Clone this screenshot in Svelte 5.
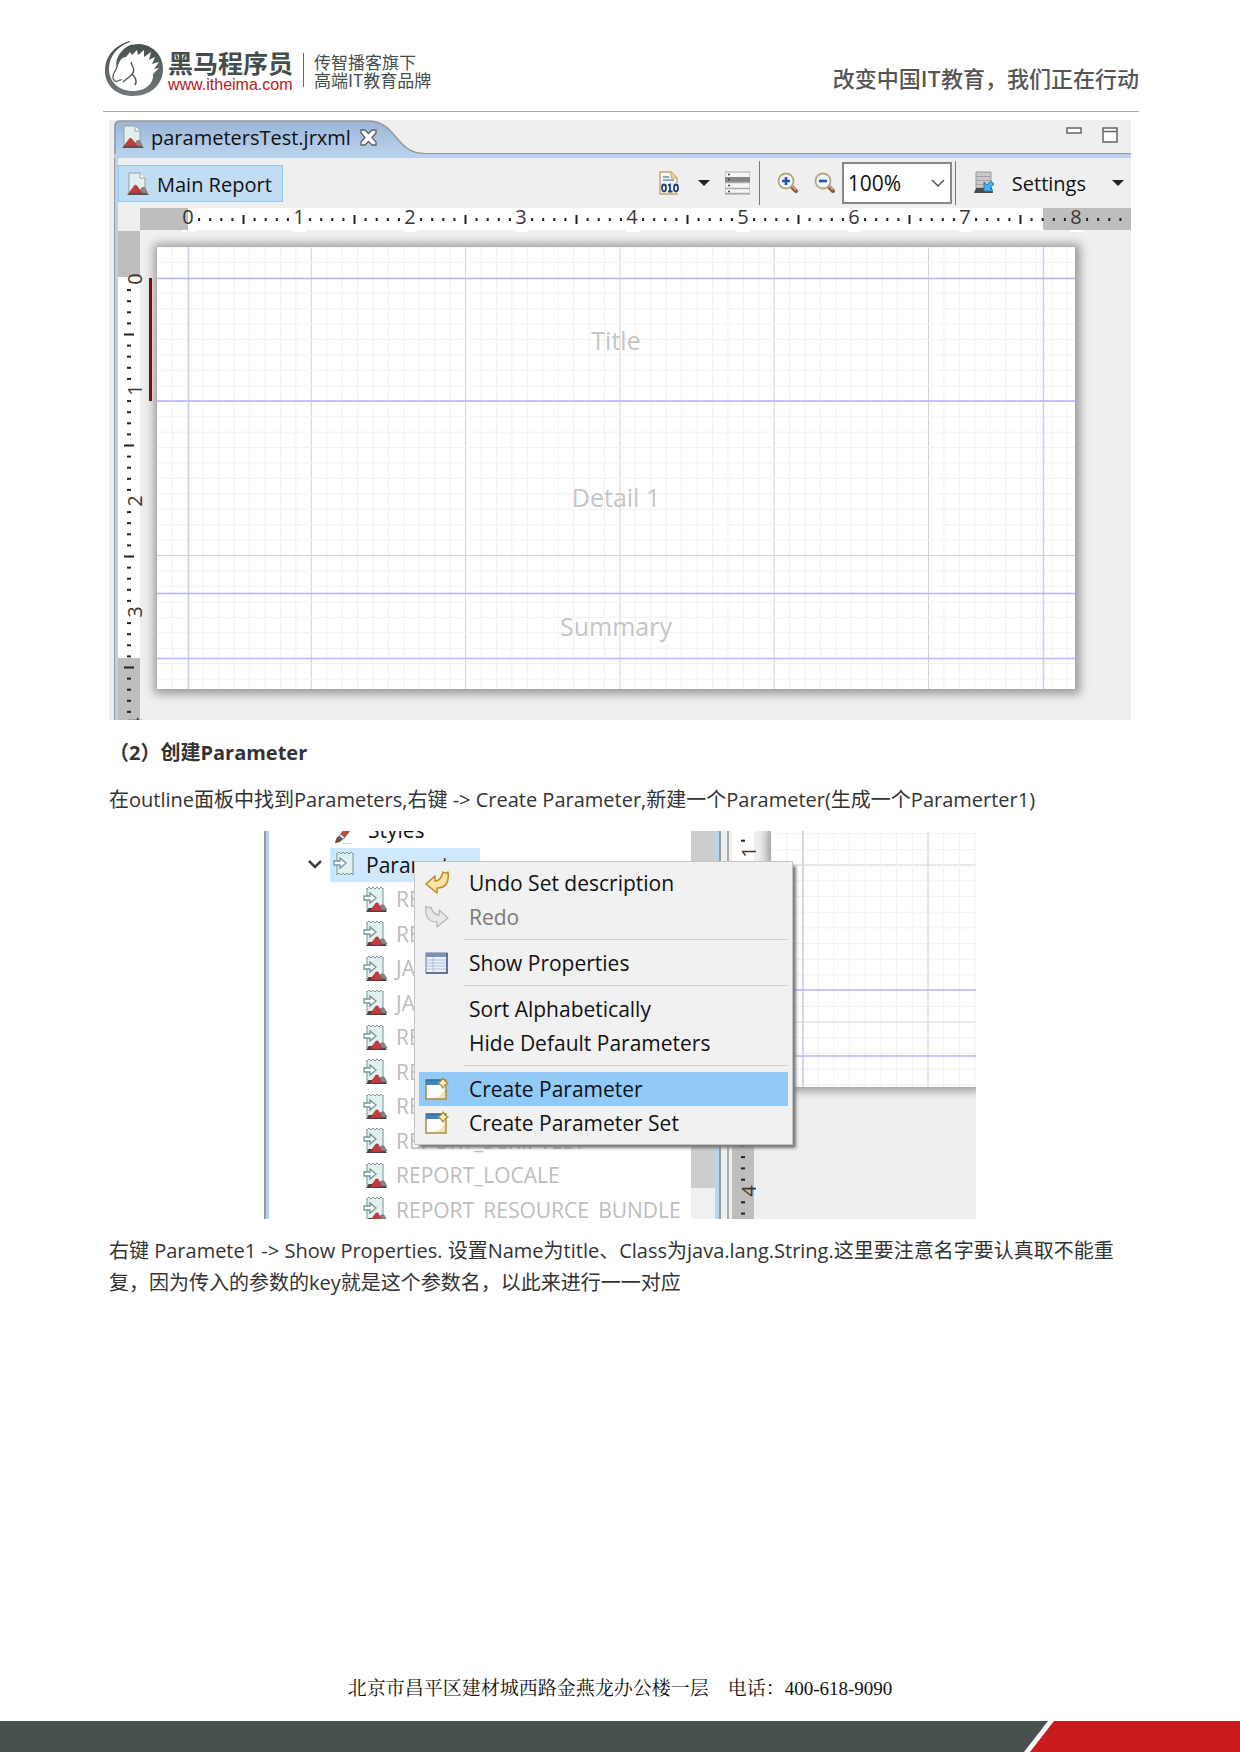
<script>
  const range = (n) => Array.from({ length: n }, (_, i) => i);

  const INCH = 111;
  const rulerTicks = range(85).filter((i) => i % 10 !== 0);
  const rulerNumbers = range(9);

  const MINOR = 15.43;
  const minorCols = range(60).map((i) => i * MINOR);
  const minorRows = range(29).map((i) => i * MINOR);
  const isMajor = (i) => i > 0 && i % 10 === 0;

  const params = [
    'REPORT_CONTEXT',
    'REPORT_PARAMETERS_MAP',
    'JASPER_REPORTS_CONTEXT',
    'JASPER_REPORT',
    'REPORT_CONNECTION',
    'REPORT_MAX_COUNT',
    'REPORT_DATA_SOURCE',
    'REPORT_SCRIPTLET',
    'REPORT_LOCALE',
    'REPORT_RESOURCE_BUNDLE',
  ];

  const menu = [
    { label: 'Undo Set description', icon: 'undo' },
    { label: 'Redo', icon: 'redo', disabled: true },
    null,
    { label: 'Show Properties', icon: 'props' },
    null,
    { label: 'Sort Alphabetically' },
    { label: 'Hide Default Parameters' },
    null,
    { label: 'Create Parameter', icon: 'create', active: true },
    { label: 'Create Parameter Set', icon: 'create' },
  ];
</script>

{#snippet reportIcon()}
  <svg class="ico" width="22" height="25" viewBox="0 0 22 25" aria-hidden="true">
    <path d="M2 1H13L18 6V22H2Z" fill="#e3efef" stroke="#8fa4a4" />
    <path d="M13 1V6H18" fill="#fff" stroke="#8fa4a4" />
    <path d="M0 23L3 20H19L22 23Z" fill="#555" />
    <path d="M11 21L15 15L18 15L21 21Z" fill="#8c8484" />
    <path d="M2 21L8 13L10 14L15 21Z" fill="#c23c3c" stroke="#9c3030" stroke-width=".6" />
  </svg>
{/snippet}

{#snippet scroll()}
  <path d="M5 2H21V23H5Z" fill="#e3f0f0" />
  <path d="M5 2V24M21 2V24" stroke="#8aa5a7" stroke-width="1.2" />
  <path d="M5 3L7 1L9 3L11 1L13 3L15 1L17 3L19 1L21 3" fill="none" stroke="#7d9799" />
  <path d="M5 24L7 22L9 24L11 22L13 24L15 22L17 24L19 22L21 24" fill="none" stroke="#7d9799" />
  <path d="M2 10H8V7L14 12L8 17V14H2Z" fill="#fff" stroke="#78969a" stroke-width="1.3" />
{/snippet}

{#snippet paramIcon(small)}
  <svg class="ico" width="26" height="27" viewBox="0 0 26 27" aria-hidden="true">
    {@render scroll()}
    {#if small}
      <path d="M4 26L7 22H22L25 26Z" fill="#444" />
      <path d="M15 24L19 19H22L25 24Z" fill="#8a8484" stroke="#666" stroke-width=".6" />
      <path d="M8 25L14 17L16 17L20 25Z" fill="#c43c40" stroke="#98282c" stroke-width=".6" />
    {/if}
  </svg>
{/snippet}

{#snippet zoomIcon(plus)}
  <svg class="ico" width="22" height="22" viewBox="0 0 22 22" aria-hidden="true">
    <path d="M14 14L19 19" stroke="#8b5a3c" stroke-width="4" stroke-linecap="round" />
    <path d="M14 13L19 18" stroke="#d7b08a" stroke-width="1.4" />
    <circle cx="9" cy="9" r="7.5" fill="#eef4fb" stroke="#b5a877" stroke-width="1.8" />
    <path d={plus ? 'M5 9H13M9 5V13' : 'M5 9H13'} stroke="#2c4eb0" stroke-width="2.6" />
  </svg>
{/snippet}

{#snippet menuIcon(name)}
  <svg class="ico" width="24" height="24" viewBox="0 0 24 24" aria-hidden="true">
    {#if name === 'undo'}
      <path d="M1 13L10 5V10Q16 10 18 1Q21 3 23 1Q25 17 12 17V22Z" fill="#fde3a0" stroke="#c08a2c" stroke-width="1.5" stroke-linejoin="round" />
    {:else if name === 'redo'}
      <path d="M23 13L14 5V10Q8 10 6 2Q3 4 1 1Q-1 17 12 17V22Z" fill="#e8e8e8" stroke="#b9b9b9" stroke-width="1.3" stroke-linejoin="round" />
    {:else if name === 'props'}
      <rect x="1" y="2" width="21" height="20" fill="#e9f0fb" stroke="#67799c" />
      <rect x="1" y="2" width="21" height="4" fill="#7d90b2" />
      <path d="M8 6V22M2 9H22M2 12H22M2 15H22M2 18H22" stroke="#b4c0d8" />
      <path d="M1 22H22V2" fill="none" stroke="#4c5d80" stroke-width="1.5" />
    {:else}
      <rect x="1" y="3" width="20" height="19" fill="#fbfdff" stroke="#a58a4a" stroke-width="1.5" />
      <path d="M1 3H17V8H1Z" fill="#3f83c4" />
      <path d="M1 3H17" stroke="#2a5f98" />
      <path d="M5 21Q18 21 20 10V21Z" fill="#f6e3a8" />
      <path d="M18 1L20 4L23 6L20 8L18 11L16 8L13 6L16 4Z" fill="#fff3c4" stroke="#b08a34" stroke-width="1.2" />
    {/if}
  </svg>
{/snippet}

{#snippet verticalTicks(step, origin, from, to)}
  {#each range(60) as i}
    {@const y = origin + (i * step) / 10}
    {#if y > from && y < to && i % 10 !== 0}
      {#if i % 5 === 0}
        <path d="M6 {y}h10" stroke="currentColor" stroke-width="2" />
      {:else}
        <path d="M9 {y}h4" stroke="currentColor" stroke-width="2" />
      {/if}
    {/if}
  {/each}
{/snippet}

<div class="page">
  <header class="masthead">
    <a class="brand" href="#home">
      <svg class="horse" width="60" height="58" viewBox="0 0 60 58" aria-hidden="true">
        <defs>
          <linearGradient id="ring" x1="0" y1="0" x2="0" y2="1">
            <stop offset="0" stop-color="#434d4b" />
            <stop offset="1" stop-color="#747a7d" />
          </linearGradient>
        </defs>
        <path d="M26 1C11 5 1 16 1 31C1 46 13 56 29 56C46 56 59 45 59 29C59 15 49 5 35 4C31 4 28 5 26 5Z" fill="url(#ring)" />
        <path d="M26 2C13 6 5 17 5 29C5 42 15 51 29 51C43 51 50 42 49 34L55 28L50 29L55 22L48 24L51 17L45 20L47 12L40 17L40 10L34 15L33 10L28 15L26 12L22 17L18 18C15 20 14 24 13 28C10 20 16 9 28 4Z" fill="#fff" />
        <path d="M19 17C13 20 14 27 11 31C8 36 8 39 11 41C13 43 15 39 18 40" fill="none" stroke="#59615f" stroke-width="1.3" />
        <path d="M27 22L28 25C31 30 30 34 25 37L19 42M28 34C32 38 33 42 31 45" fill="none" stroke="#4b5553" stroke-width="1.4" />
      </svg>
      <span class="names">
        <strong>黑马程序员</strong>
        <span class="url">www.itheima.com</span>
      </span>
      <span class="tagline">传智播客旗下<br />高端IT教育品牌</span>
    </a>
    <p class="slogan">改变中国IT教育，我们正在行动</p>
  </header>

  <main>
    <section class="editor" aria-label="Report editor">
      <div class="editor-frame">
        <div class="tabs">
          <div class="tab">
            <svg class="tab-shape" width="312" height="34" viewBox="0 0 312 34" aria-hidden="true">
              <defs>
                <linearGradient id="tabfill" x1="0" y1="0" x2="0" y2="1">
                  <stop offset="0" stop-color="#9ab5d6" />
                  <stop offset="1" stop-color="#b9d1ec" />
                </linearGradient>
              </defs>
              <path d="M0 34V6Q0 1 6 1H254C283 1 281 33 310 33.5V34Z" fill="url(#tabfill)" />
              <path d="M1 34V6Q1 1 6 1H254C283 1 281 33 310 33.5" fill="none" stroke="#999" stroke-width="1.5" />
            </svg>
            <button class="tab-name">{@render reportIcon()}parametersTest.jrxml</button>
            <button class="close" aria-label="Close">
              <svg width="17" height="17" viewBox="0 0 17 17" aria-hidden="true">
                <path d="M1 1H5L8.500 4.500L12 1H16V4L12 8.500L16 13V16H12L8.500 12.500L5 16H1V13L5 8.500L1 4Z" fill="#fff" stroke="#606060" stroke-width="1.3" />
              </svg>
            </button>
          </div>
          <div class="window-buttons">
            <button aria-label="Minimize">
              <svg width="16" height="16" viewBox="0 0 16 16"><rect x="1" y="1" width="14" height="5" fill="#fff" stroke="#666" stroke-width="1.500" /></svg>
            </button>
            <button aria-label="Maximize">
              <svg width="16" height="16" viewBox="0 0 16 16"><path d="M1 1H15V15H1ZM1 4.500H15" fill="#fff" stroke="#666" stroke-width="1.500" /></svg>
            </button>
          </div>
        </div>

        <div class="toolbar">
          <button class="main-report">{@render reportIcon()}Main Report</button>
          <div class="tools">
            <button class="compile" aria-label="Compile">
              <svg class="ico" width="22" height="24" viewBox="0 0 22 24">
                <path d="M2 1H13L19 7V23H2Z" fill="#f4f8fd" stroke="#c4a659" stroke-width="1.4" />
                <path d="M13 1V7H19" fill="#ecd49a" stroke="#c4a659" />
                <path d="M5 6H11M5 9H16" stroke="#6c8dc0" stroke-width="1.4" />
                <rect x="3" y="12" width="18" height="10" fill="#f2f6fb" />
                <ellipse cx="6" cy="17" rx="2" ry="3.500" fill="none" stroke="#213f77" stroke-width="1.8" />
                <path d="M10 14.500L12 13.500V20.500M10 20.500H14.500" fill="none" stroke="#213f77" stroke-width="1.8" />
                <ellipse cx="18" cy="17" rx="2" ry="3.500" fill="none" stroke="#213f77" stroke-width="1.8" />
              </svg>
            </button>
            <button class="drop" aria-label="Compile options"><span class="caret"></span></button>
            <button class="bands" aria-label="Bands">
              <svg class="ico" width="25" height="24" viewBox="0 0 25 24">
                <rect x="0" y="1" width="25" height="22" fill="#f6f6f6" stroke="#aaa" />
                <rect x="0" y="6" width="25" height="5" fill="#858585" />
                <path d="M0 11.500H25M0 17.500H25M0 22.500H25" stroke="#aaa" stroke-width="1.5" />
                <path d="M3 3.500h2M3 8.500h2M3 14.500h2M3 20.500h2" stroke="#444" stroke-width="1.5" />
              </svg>
            </button>
            <span class="divider"></span>
            <button class="zoom-in" aria-label="Zoom in">{@render zoomIcon(true)}</button>
            <button class="zoom-out" aria-label="Zoom out">{@render zoomIcon(false)}</button>
            <span class="combo">
              <select aria-label="Zoom level"><option>100%</option></select>
              <svg class="chevron" width="14" height="9" viewBox="0 0 14 9" aria-hidden="true"><path d="M1 1L7 7L13 1" fill="none" stroke="#555" stroke-width="1.5" /></svg>
            </span>
            <span class="divider near"></span>
            <button class="settings">
              <svg class="ico" width="20" height="24" viewBox="0 0 20 24" aria-hidden="true">
                <path d="M2 1H17V17H2Z" fill="#c9c9c9" stroke="#999" />
                <path d="M2 5.500H17M2 9.500H17M2 13.500H17" stroke="#a2a2a2" />
                <path d="M0 22L2 17H18L19 22Z" fill="#4a4a4a" />
                <path d="M10 11V20H19L16 17L20 13L17 10L13 14Z" fill="#45b2ee" stroke="#1e80c4" />
              </svg>
              Settings
            </button>
            <button class="drop last" aria-label="Settings options"><span class="caret"></span></button>
          </div>
        </div>

        <div class="ruler-h">
          <svg width="100%" height="25" aria-hidden="true">
            <rect width="100%" height="22" fill="#bebebe" />
            <rect x="48" width="855" height="22" fill="#fff" />
            {#each rulerTicks as i}
              {@const x = 48 + (i * INCH) / 10}
              {#if i % 5 === 0}
                <path d="M{x} 7v9" stroke="#222" stroke-width="2" />
              {:else}
                <path d="M{x} 10v3" stroke="#222" stroke-width="2" />
              {/if}
            {/each}
            {#each rulerNumbers as n}
              <rect x={42 + n * INCH} y="22" width="13" height="2" fill="#fff" />
              <text class="num" x={48 + n * INCH} y="16">{n}</text>
            {/each}
          </svg>
        </div>

        <div class="workspace">
          <svg class="ruler-v" width="24" height="489" aria-hidden="true">
            <rect width="22" height="489" fill="#bebebe" />
            <rect y="46" width="22" height="381" fill="#fff" />
            {@render verticalTicks(INCH, 48, 50, 489)}
            {#each range(5) as n}
              <text class="num" transform="translate(24 {48 + n * INCH}) rotate(-90)">{n}</text>
            {/each}
          </svg>
          <div class="band-mark"></div>
          <div class="sheet">
            <svg class="grid" width="100%" height="442" aria-hidden="true">
              {#each minorCols as x, i}
                <path d="M{x} 0V442" stroke={isMajor(i) ? '#d2d2d2' : '#f1f1f1'} />
              {/each}
              {#each minorRows as y, i}
                <path d="M0 {y}H1200" stroke={isMajor(i) ? '#d2d2d2' : '#f1f1f1'} />
              {/each}
              <path d="M31.500 0V442M886.500 0V442" stroke="#ccccfb" stroke-width="1.5" />
              <path d="M0 31.500H1200M0 154H1200M0 346.500H1200M0 411.500H1200" stroke="#b8b5fa" stroke-width="1.5" />
            </svg>
            <div class="band title">Title</div>
            <div class="band detail">Detail 1</div>
            <div class="band summary">Summary</div>
          </div>
        </div>
      </div>
    </section>

    <h3>（2）创建Parameter</h3>
    <p class="step">在outline面板中找到Parameters,右键 -&gt; Create Parameter,新建一个Parameter(生成一个Paramerter1)</p>

    <section class="outline" aria-label="Outline">
      <ul class="tree">
        <li class="top">
          <svg class="ico" width="26" height="27" viewBox="0 0 26 27" aria-hidden="true">
            <path d="M8 26H24L12 27Z" fill="#ccc" />
            <path d="M8 18L20 4L23 7L12 21Z" fill="#c9463a" stroke="#8e3a30" />
            <path d="M7 19L9 17L13 21L11 22Z" fill="#dfe8f2" stroke="#7d8da5" />
            <path d="M3 26Q4 20 7 19L11 22Q8 26 3 26Z" fill="#7a4a34" />
            <path d="M5 23L8 20L10 22Z" fill="#3f6fb0" />
          </svg>
          <span>Styles</span>
        </li>
        <li class="top selected">
          <svg class="twisty" width="14" height="9" viewBox="0 0 14 9" aria-hidden="true"><path d="M1 1L7 7L13 1" fill="none" stroke="#404040" stroke-width="2.5" /></svg>
          <div class="hit">{@render paramIcon(false)}<span>Parameters</span></div>
        </li>
        {#each params as p}
          <li class="child">{@render paramIcon(true)}<span>{p}</span></li>
        {/each}
      </ul>
      <div class="scrollbar"><div class="thumb"></div></div>
      <div class="sash"></div>
      <svg class="side-ruler" width="24" height="388" aria-hidden="true">
        <rect width="22" height="388" fill="#fff" />
        <rect y="225" width="22" height="163" fill="#bebebe" />
        {@render verticalTicks(113, -92, 0, 388)}
        <text class="num" transform="translate(24 21) rotate(-90)">1</text>
        <text class="num" transform="translate(24 360) rotate(-90)">4</text>
      </svg>
      <div class="preview">
        <svg class="grid" width="100%" height="256" aria-hidden="true">
          {#each range(24) as i}
            <path d="M{i * 15.7} 0V256" stroke={isMajor(i) ? '#d2d2d2' : '#f1f1f1'} />
            <path d="M0 {2.700 + i * 15.7}H400" stroke={i === 2 || i === 12 ? '#d2d2d2' : '#f1f1f1'} />
          {/each}
          <path d="M32 0V256" stroke="#d2d2fc" stroke-width="2" />
          <path d="M0 159H400M0 225H400" stroke="#b8b5fa" stroke-width="1.5" />
        </svg>
      </div>
      <div class="menu" role="menu">
        {#each menu as item}
          {#if item}
            <button role="menuitem" class:active={item.active} disabled={item.disabled}>
              <span class="slot">{#if item.icon}{@render menuIcon(item.icon)}{/if}</span>{item.label}
            </button>
          {:else}
            <hr />
          {/if}
        {/each}
      </div>
    </section>

    <p class="note">右键 Paramete1 -&gt; Show Properties. 设置Name为title、Class为java.lang.String.这里要注意名字要认真取不能重复，因为传入的参数的key就是这个参数名，以此来进行一一对应</p>
  </main>

  <footer>
    <address>北京市昌平区建材城西路金燕龙办公楼一层　电话：400-618-9090</address>
    <div class="stripe"><div class="dark"></div><div class="red"></div></div>
  </footer>
</div>

<style>
  :global(body) {
    margin: 0;
    background: #fff;
  }
  .page {
    min-height: 100vh;
    display: flex;
    flex-direction: column;
    font-family: 'Open Sans', 'Noto Sans CJK SC', sans-serif;
    color: #333;
  }
  button {
    font: inherit;
    color: inherit;
    background: none;
    border: 0;
    padding: 0;
    display: flex;
    align-items: center;
    white-space: nowrap;
  }
  .ico {
    flex: none;
    display: block;
  }
  svg {
    display: block;
  }

  .masthead {
    box-sizing: border-box;
    height: 112px;
    margin: 0 101px 0 103px;
    padding-top: 40px;
    border-bottom: 1px solid #a9a9a9;
    display: flex;
    justify-content: space-between;
    align-items: flex-start;
  }
  .brand {
    display: flex;
    color: #434d4b;
    text-decoration: none;
    font-family: 'Noto Sans CJK SC', sans-serif;
  }
  .horse {
    margin-left: 1px;
  }
  .names {
    display: flex;
    flex-direction: column;
    margin: 8px 10px 0 4px;
  }
  .names strong {
    font-size: 25px;
    line-height: 28px;
    font-weight: 700;
  }
  .url {
    font-family: 'Liberation Sans', sans-serif;
    font-size: 16px;
    line-height: 18px;
    color: #b4201c;
  }
  .tagline {
    align-self: flex-start;
    margin-top: 13px;
    padding-left: 10px;
    border-left: 1px solid #666;
    font-size: 17px;
    line-height: 18px;
    height: 34px;
  }
  .slogan {
    margin: 21px 0 0;
    font-family: 'Noto Sans CJK SC', sans-serif;
    font-size: 22px;
    line-height: 32px;
    font-weight: 500;
    color: #555;
  }

  main {
    margin: 8px 109px 0;
    flex: 1;
  }
  .editor {
    height: 600px;
    padding-left: 5px;
    background: #efefef;
    overflow: hidden;
    color: #111;
    font-size: 20px;
  }
  .tabs {
    display: flex;
    justify-content: space-between;
    height: 33px;
    border-bottom: 1px solid #999;
    box-shadow: 0 4px #b9d1ec;
    position: relative;
  }
  .tab {
    position: relative;
    display: flex;
    align-items: center;
    width: 312px;
    height: 34px;
    padding-left: 8px;
    gap: 9px;
  }
  .tab-shape {
    position: absolute;
    left: 0;
    top: 0;
  }
  .tab-name {
    position: relative;
    gap: 7px;
  }
  .close {
    position: relative;
  }
  .window-buttons {
    display: flex;
    gap: 20px;
    align-items: center;
    padding: 0 13px 4px 0;
  }
  .toolbar,
  .workspace {
    border-left: 1px solid #999;
    box-shadow: inset 3px 0 #b9d1ec;
  }
  .toolbar {
    height: 50px;
    margin-top: 4px;
    display: flex;
    justify-content: space-between;
    align-items: center;
    padding-left: 3px;
  }
  .main-report {
    box-sizing: border-box;
    height: 37px;
    padding: 2px 10px 0 8px;
    gap: 8px;
    background: #c1dcf3;
    border: 1px solid #90c8f6;
  }
  .tools {
    display: flex;
    align-items: center;
  }
  .caret {
    border: 6px solid transparent;
    border-top-color: #222;
    border-bottom: 0;
  }
  .drop {
    margin: 0 15px 0 18px;
  }
  .drop.last {
    margin: 0 7px 0 26px;
  }
  .divider {
    width: 1px;
    height: 44px;
    background: #777;
    margin: 0 17px 0 9px;
  }
  .divider.near {
    margin: 0 18px 0 3px;
  }
  .zoom-out {
    margin: 0 6px 0 15px;
  }
  .combo {
    position: relative;
  }
  select {
    appearance: none;
    box-sizing: border-box;
    width: 110px;
    height: 42px;
    padding: 0 4px;
    border: 2px solid #888;
    border-radius: 0;
    background: #fff;
    font: inherit;
    font-size: 21px;
    color: #111;
    display: block;
  }
  .chevron {
    position: absolute;
    right: 7px;
    top: 17px;
    pointer-events: none;
  }
  .settings {
    gap: 18px;
  }

  .ruler-h {
    height: 23px;
    padding-left: 26px;
    box-shadow: inset 1px 0 #999, inset 4px 0 #b9d1ec;
  }
  .ruler-h svg,
  .ruler-v {
    overflow: visible;
  }
  .num {
    font-size: 20px;
    text-anchor: middle;
    font-family: 'Open Sans', sans-serif;
    fill: #3b3632;
  }
  .workspace {
    display: flex;
    align-items: flex-start;
    padding-left: 3px;
    height: 489px;
  }
  .ruler-v,
  .side-ruler {
    flex: none;
    color: #222;
  }
  .band-mark {
    width: 3px;
    height: 123px;
    margin: 47px 5px 0 7px;
    background: #850808;
    position: relative;
    z-index: 1;
  }
  .sheet {
    position: relative;
    flex: 1;
    height: 381px;
    margin: 16px 56px 0 0;
    padding: 31px 0 30px;
    background: #fff;
    box-shadow: 1px 1px 9px 4px #999;
    font-size: 25px;
    color: #c6c6c6;
  }
  .grid {
    position: absolute;
    left: 0;
    top: 0;
  }
  .band {
    position: relative;
    display: flex;
    align-items: center;
    justify-content: center;
  }
  .title {
    height: 123px;
  }
  .detail {
    height: 192px;
  }
  .summary {
    height: 65px;
  }

  h3 {
    margin: 17px 0 15px;
    font-size: 20px;
    line-height: 32px;
    font-weight: 700;
  }
  .step,
  .note {
    margin: 0;
    font-size: 20px;
    line-height: 32px;
  }
  .note {
    margin-top: 16px;
  }

  .outline {
    position: relative;
    display: flex;
    max-width: 712px;
    height: 388px;
    margin: 15px auto 0;
    overflow: hidden;
    background: #efefef;
    font-size: 21px;
    color: #111;
  }
  .tree {
    box-sizing: border-box;
    list-style: none;
    width: 427px;
    height: 414px;
    margin: -18px 0 0;
    padding: 0;
    border-left: 2px solid #999;
    box-shadow: inset 3px 0 #bcd3ee;
    background: #fff;
    display: flex;
    flex-direction: column;
  }
  .tree li {
    flex: 1;
    min-height: 0;
    display: flex;
    align-items: center;
    white-space: nowrap;
  }
  .top {
    padding-left: 66px;
    gap: 10px;
  }
  .top.selected {
    padding-left: 42px;
    gap: 8px;
  }
  .hit {
    display: flex;
    align-items: center;
    gap: 8px;
    width: 148px;
    height: 100%;
    padding-left: 2px;
    background: #cde8ff;
  }
  .child {
    padding-left: 96px;
    gap: 8px;
    color: #bdbdbd;
  }
  .scrollbar {
    width: 24px;
    background: #f0f0f0;
  }
  .thumb {
    height: 357px;
    background: #cdcdcd;
  }
  .sash {
    box-sizing: border-box;
    width: 14px;
    border-left: 4px solid #bcd3ee;
    border-right: 2px solid #aaa;
    box-shadow: inset 2px 0 #999;
    margin-right: 3px;
  }
  .preview {
    position: relative;
    flex: 1;
    height: 256px;
    margin-left: 15px;
    background: #fff;
    box-shadow: 0 0 9px 4px #999;
    clip-path: inset(0 0 -20px -15px);
  }
  .menu {
    position: absolute;
    left: 150px;
    top: 30px;
    box-sizing: border-box;
    width: 379px;
    padding: 4px;
    border: 1px solid #c4c4c4;
    background: #f1f1f1;
    box-shadow: 4px 4px 3px -1px #777;
  }
  .menu button {
    width: 100%;
    height: 34px;
  }
  .menu button:disabled {
    color: #7a7a7a;
  }
  .menu .active {
    background: #91c9f7;
  }
  .slot {
    width: 44px;
    padding-left: 6px;
  }
  .menu hr {
    height: 1px;
    margin: 5px 0 6px 44px;
    border: 0;
    background: #d3d3d3;
  }

  footer address {
    font-family: 'Liberation Serif', 'Noto Serif CJK SC', 'Noto Sans CJK SC', serif;
    font-style: normal;
    font-size: 19px;
    line-height: 24px;
    text-align: center;
    color: #111;
    margin-bottom: 20px;
  }
  .stripe {
    display: flex;
    height: 31px;
    background: #fff;
  }
  .dark {
    flex: 1;
    background: #495150;
    clip-path: polygon(0 0, 100% 0, calc(100% - 24px) 100%, 0 100%);
  }
  .red {
    width: 210px;
    margin-left: -18px;
    background: #c91a1c;
    clip-path: polygon(24px 0, 100% 0, 100% 100%, 0 100%);
  }
</style>
